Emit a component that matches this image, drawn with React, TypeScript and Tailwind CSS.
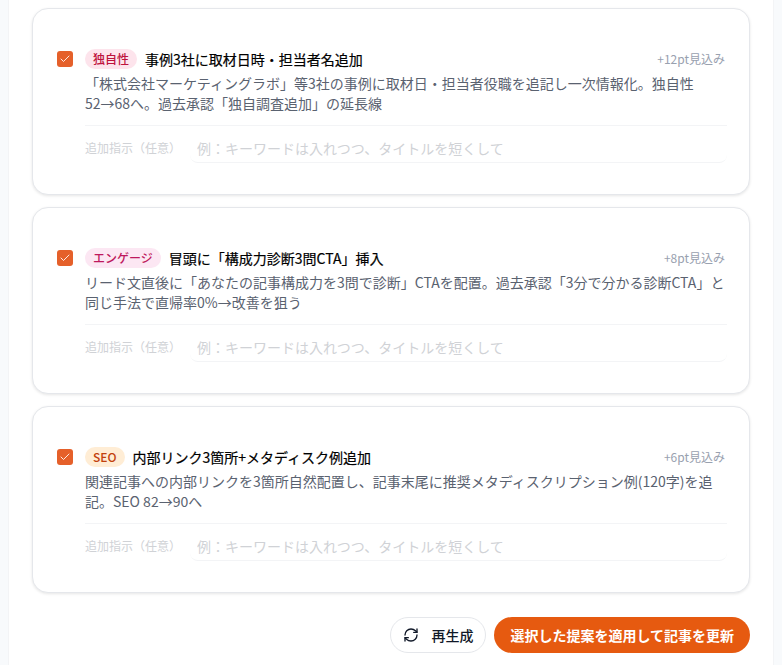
import { Check, RefreshCw } from 'lucide-react';

interface Suggestion {
  tag: string;
  tagClass: string;
  title: string;
  gain: string;
  body: string;
}

const suggestions: Suggestion[] = [
  {
    tag: '独自性',
    tagClass: 'bg-[#fde4ec] text-[#be123c]',
    title: '事例3社に取材日時・担当者名追加',
    gain: '+12pt見込み',
    body: '「株式会社マーケティングラボ」等3社の事例に取材日・担当者役職を追記し一次情報化。独自性52→68へ。過去承認「独自調査追加」の延長線',
  },
  {
    tag: 'エンゲージ',
    tagClass: 'bg-[#fce7f3] text-[#be185d]',
    title: '冒頭に「構成力診断3問CTA」挿入',
    gain: '+8pt見込み',
    body: 'リード文直後に「あなたの記事構成力を3問で診断」CTAを配置。過去承認「3分で分かる診断CTA」と同じ手法で直帰率0%→改善を狙う',
  },
  {
    tag: 'SEO',
    tagClass: 'bg-[#ffedd5] text-[#c2410c]',
    title: '内部リンク3箇所+メタディスク例追加',
    gain: '+6pt見込み',
    body: '関連記事への内部リンクを3箇所自然配置し、記事末尾に推奨メタディスクリプション例(120字)を追記。SEO 82→90へ',
  },
];

function SuggestionCard({ item }: { item: Suggestion }) {
  return (
    <div className="h-[187px] rounded-2xl border border-gray-200 bg-white px-6 pt-10 shadow-[0_1px_3px_rgba(0,0,0,0.1)]">
      <div className="flex items-start gap-3">
        <span className="mt-[2px] flex h-4 w-4 shrink-0 items-center justify-center rounded-[3px] bg-[#e5602a]">
          <Check className="h-3 w-3 text-white" strokeWidth={1.75} />
        </span>
        <div className="min-w-0 flex-1">
          <div className="flex h-5 items-center justify-between">
            <div className="flex items-center gap-2">
              <span className={`rounded-full px-2 py-0.5 text-xs leading-[16px] font-medium ${item.tagClass}`}>
                {item.tag}
              </span>
              <span className="text-sm leading-5 text-black [-webkit-text-stroke:0.2px_black]">{item.title}</span>
            </div>
            <span className="text-xs text-gray-400">{item.gain}</span>
          </div>
          <p className="mt-1 text-sm leading-5 text-[#5a6270]">{item.body}</p>
        </div>
      </div>
      <div className="mt-3 ml-7 -mr-0.5 flex h-[38px] items-center gap-[9px] border-t border-gray-100 pt-[7px]">
        <span className="shrink-0 text-xs text-[#d0d2d6]">追加指示（任意）</span>
        <input
          readOnly
          placeholder="例：キーワードは入れつつ、タイトルを短くして"
          className="h-[30px] min-w-0 flex-1 rounded-lg border-b border-gray-100 px-[7px] text-sm outline-none placeholder:text-[#d0d2d6]"
        />
      </div>
    </div>
  );
}

export default function App() {
  return (
    <div className="h-[665px] overflow-hidden bg-[#f8fafc] px-2 font-['Noto_Sans_CJK_JP','Noto_Sans',sans-serif]">
      <div className="h-full border-x border-gray-100 bg-white px-[23px] pt-2">
        <div className="flex flex-col gap-3">
          {suggestions.map((item) => (
            <SuggestionCard key={item.tag} item={item} />
          ))}
        </div>
        <div className="mt-6 flex justify-end gap-2">
          <button className="flex h-9 items-center gap-3 rounded-full border border-gray-200 bg-white px-3 text-sm font-medium text-gray-900">
            <RefreshCw className="h-4 w-4" strokeWidth={2} />
            再生成
          </button>
          <button className="h-9 rounded-full bg-[#e65a10] px-4 text-sm font-bold text-white">
            選択した提案を適用して記事を更新
          </button>
        </div>
      </div>
    </div>
  );
}
